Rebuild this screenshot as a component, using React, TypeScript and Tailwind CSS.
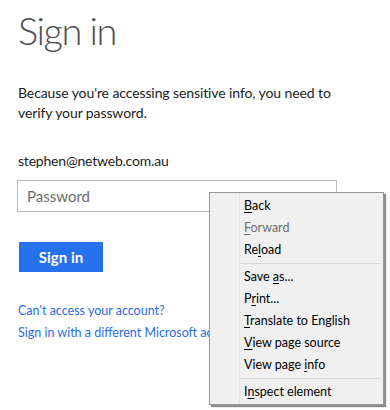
import React from 'react';

const MenuItem: React.FC<{ pre?: string; u: string; post: string; disabled?: boolean }> = ({ pre = '', u, post, disabled }) => {
  return (
    <div className={`h-[22px] flex items-center pl-[34px] text-[12.5px] ${disabled ? 'text-[#6d6d6d]' : 'text-[#000]'}`}>
      <span>
        {pre}
        <span className="underline underline-offset-2">{u}</span>
        {post}
      </span>
    </div>
  );
};

const Separator: React.FC = () => (
  <div className="h-[5px] flex items-center pl-[30px] pr-[2px]">
    <div className="h-px w-full bg-[#d7d7d7]" />
  </div>
);

const ContextMenu: React.FC = () => {
  return (
    <div className="absolute left-[209px] top-[192px] w-[175px] h-[213px] bg-[#f0f0f0] border border-[#979797] shadow-[2px_2px_1px_rgba(0,0,0,0.45)] font-['Lato',sans-serif]">
      <div className="absolute left-[29px] top-0 bottom-0 w-px bg-[#e2e2e2]" />
      <div className="relative pt-[2px]">
        <MenuItem u="B" post="ack" />
        <MenuItem u="F" post="orward" disabled />
        <MenuItem pre="Re" u="l" post="oad" />
        <Separator />
        <MenuItem pre="Save " u="a" post="s..." />
        <MenuItem pre="P" u="r" post="int..." />
        <MenuItem u="T" post="ranslate to English" />
        <MenuItem u="V" post="iew page source" />
        <MenuItem pre="View page " u="i" post="nfo" />
        <Separator />
        <MenuItem pre="I" u="n" post="spect element" />
      </div>
    </div>
  );
};

const App: React.FC = () => {
  return (
    <div className="relative w-[390px] h-[410px] overflow-hidden bg-white font-['Lato',sans-serif]">
      <div className="pl-[18px] pt-[4px]">
        <h1 className="text-[38px] leading-[52px] font-light tracking-[-1.5px] text-[#505050]">Sign in</h1>
        <p className="mt-[27px] text-[14px] leading-[20px] tracking-[-0.1px] text-[#222] w-[340px]">
          Because you're accessing sensitive info, you need to
          <br />
          verify your password.
        </p>
        <div className="mt-[28px] text-[14px] leading-[20px] tracking-[-0.2px] text-[#222]">stephen@netweb.com.au</div>
        <div className="mt-[9px] -ml-px w-[320px] h-[32px] border border-[#bababa] flex items-center px-[9px] text-[15px] text-[#6d6d6d]">
          Password
        </div>
        <button className="mt-[30px] ml-px w-[84px] h-[30px] bg-[#2672ec] text-white text-[15px] font-bold">
          Sign in
        </button>
        <div className="mt-[29px] flex flex-col gap-[2px] text-[12.5px] leading-[20px] text-[#2a6be6] whitespace-nowrap">
          <a>Can't access your account?</a>
          <a>Sign in with a different Microsoft account</a>
        </div>
      </div>
      <ContextMenu />
    </div>
  );
};

export default App;
